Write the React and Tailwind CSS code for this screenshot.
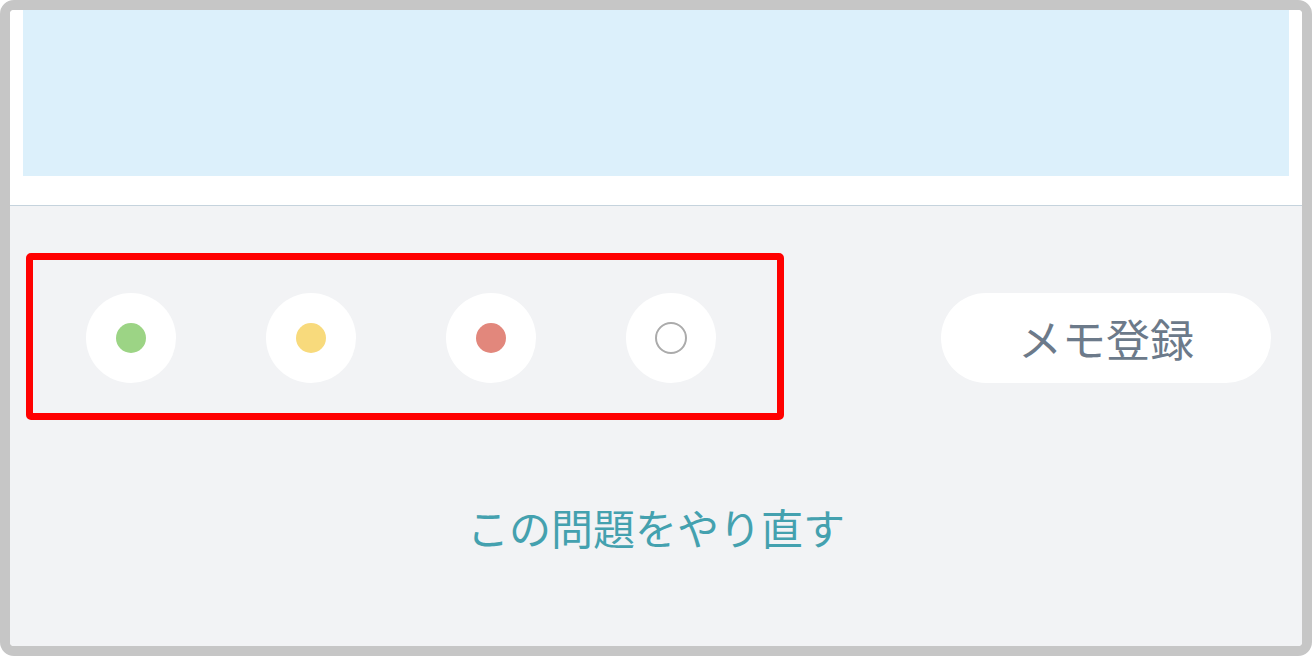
import React from 'react';

const jp = { fontFamily: '"Noto Sans CJK JP", "Noto Sans", sans-serif' };

const StatusDot = ({ kind }) => (
    <button className="w-[90px] h-[90px] rounded-full bg-white flex items-center justify-center shrink-0">
        {kind === 'green' && <span className="w-[30px] h-[30px] rounded-full bg-[#9cd485]" />}
        {kind === 'yellow' && <span className="w-[30px] h-[30px] rounded-full bg-[#f8da7c]" />}
        {kind === 'red' && <span className="w-[30px] h-[30px] rounded-full bg-[#e2877c]" />}
        {kind === 'none' && <span className="w-[32px] h-[32px] rounded-full border-[2.5px] border-[#ababab]" />}
    </button>
);

const App = () => {
    return (
        <div className="w-[1312px] h-[656px] bg-white">
            <div className="w-full h-full border-[10px] border-[#c6c6c6] rounded-[14px] overflow-hidden flex flex-col" style={jp}>
                {/* 問題エリア */}
                <div className="bg-white px-[13px] h-[196px] shrink-0 border-b border-[#c5d3dd]">
                    <div className="h-[166px] bg-[#dcf0fb]" />
                </div>

                <div className="flex-1 bg-[#f2f3f5] flex flex-col">
                    <div className="flex items-center justify-between pl-[16px] pr-[31px] pt-[47px]">
                        {/* 理解度 */}
                        <div className="border-[7px] border-[#ff0000] rounded-[5px] pl-[53px] pr-[61px] pt-[33px] pb-[30px] flex gap-[90px]">
                            <StatusDot kind="green" />
                            <StatusDot kind="yellow" />
                            <StatusDot kind="red" />
                            <StatusDot kind="none" />
                        </div>
                        <button className="w-[330px] h-[90px] rounded-full bg-white text-[#6c7a8a] text-[44px] leading-none mt-[3px]">
                            メモ登録
                        </button>
                    </div>

                    <div className="flex justify-center pt-[86px]">
                        <span className="text-[#44a1af] text-[42px] leading-none">この問題をやり直す</span>
                    </div>
                </div>
            </div>
        </div>
    );
};

export default App;
